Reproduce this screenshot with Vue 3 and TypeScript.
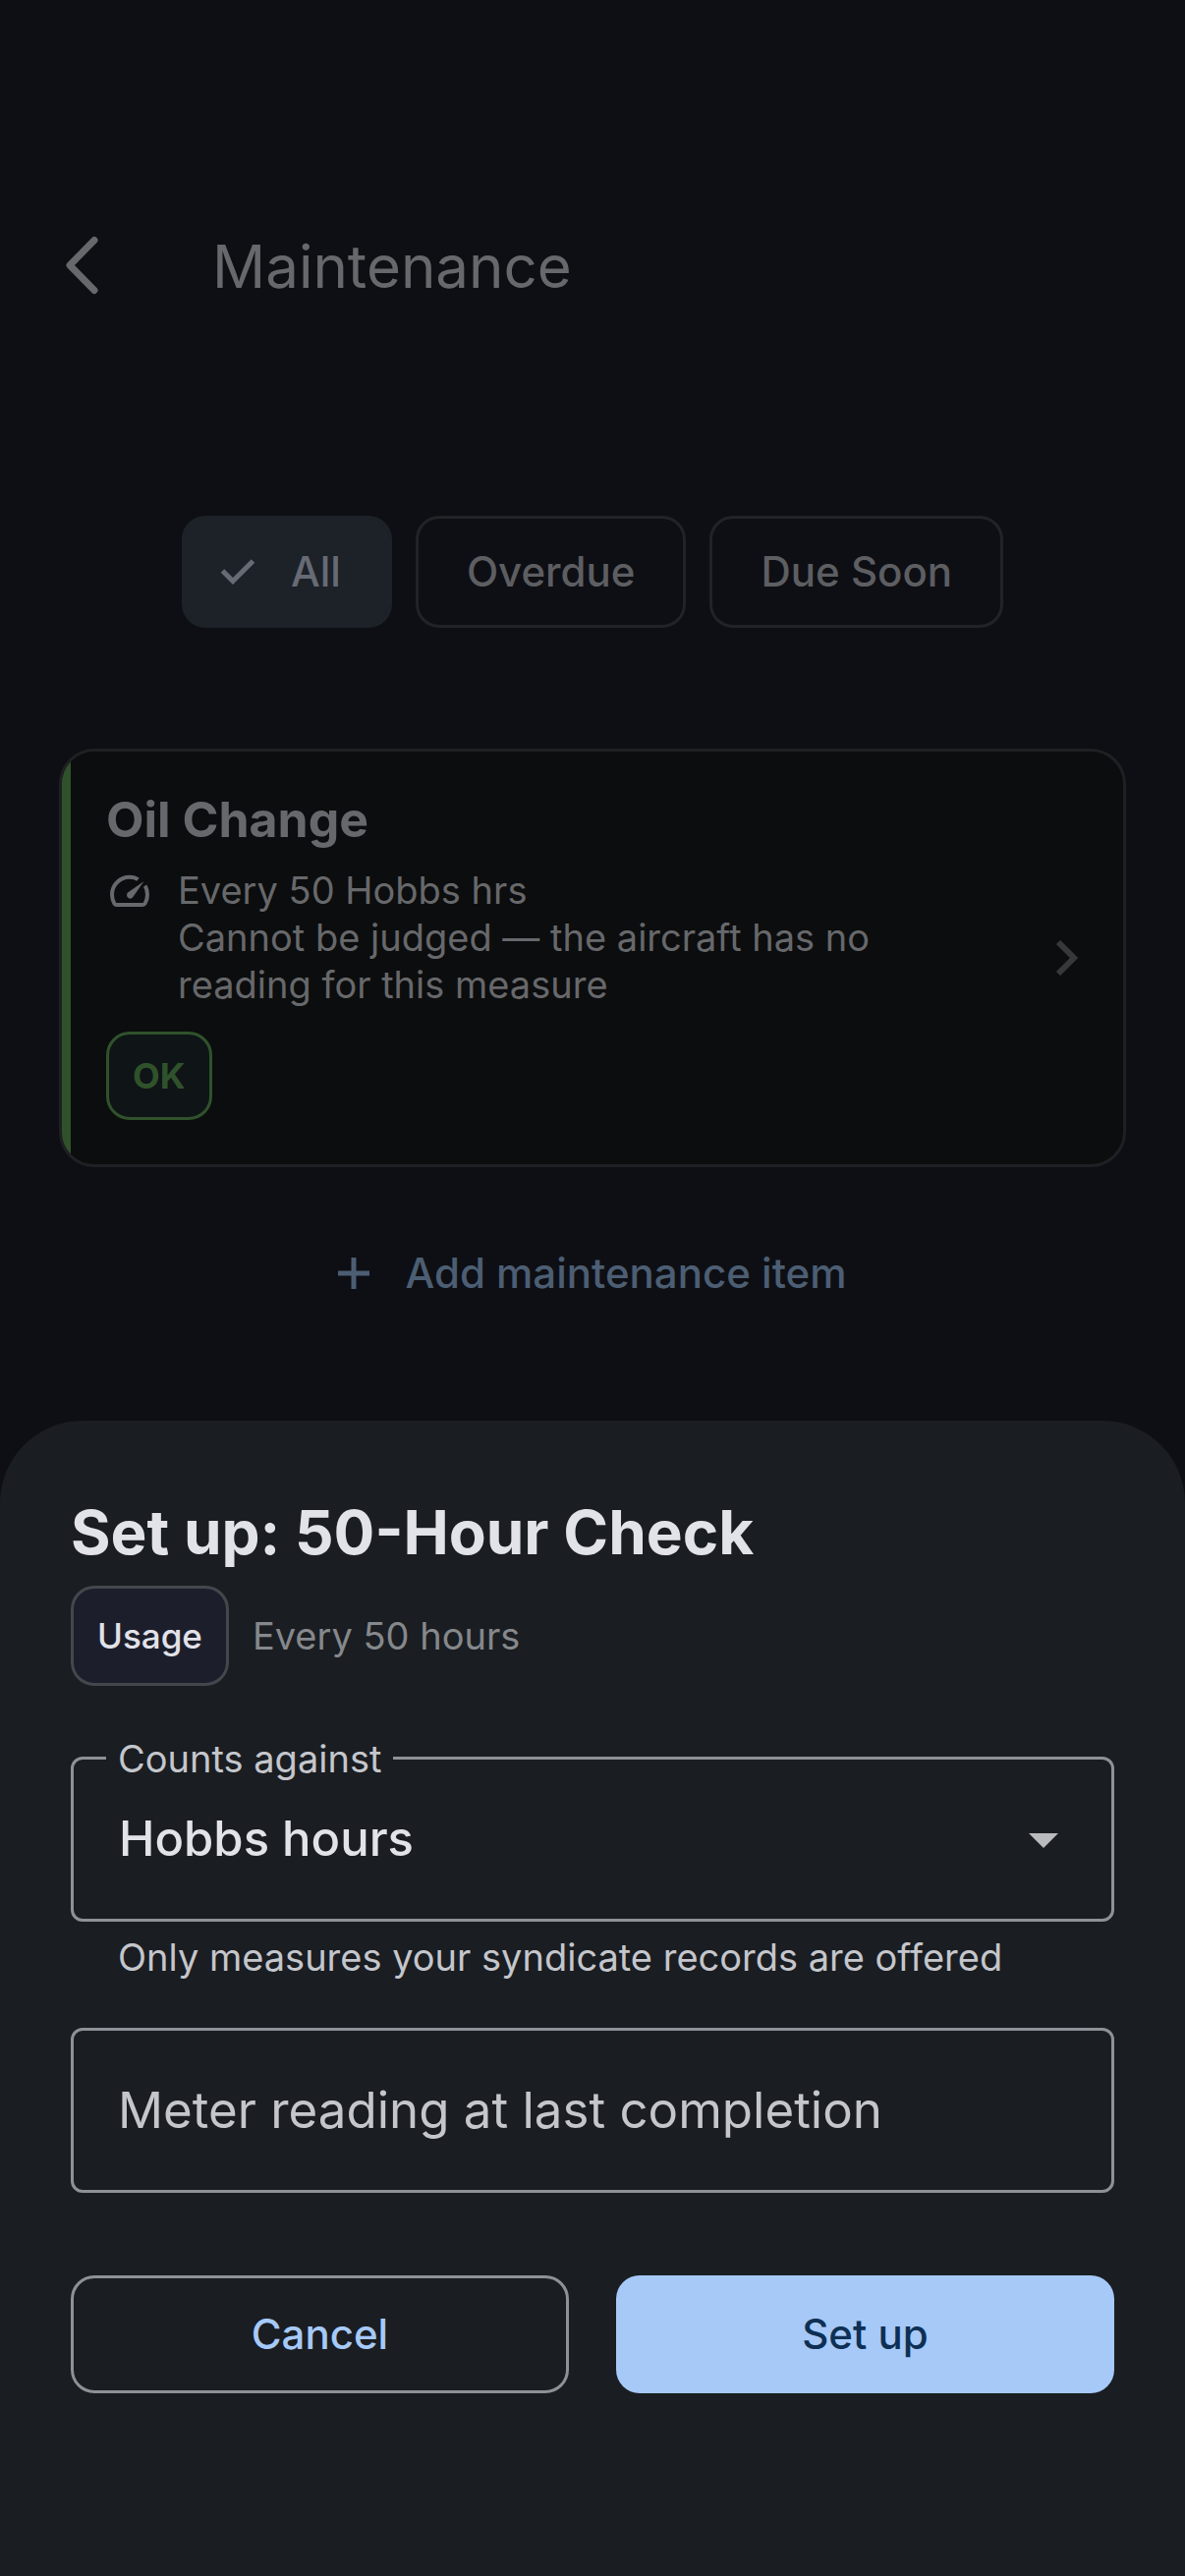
<script setup lang="ts">
import { ref } from 'vue'

type Filter = 'All' | 'Overdue' | 'Due Soon'

const filters: Filter[] = ['All', 'Overdue', 'Due Soon']
const activeFilter = ref<Filter>('All')
const measure = ref('Hobbs hours')
const reading = ref('')
</script>

<template>
  <div class="page">
    <header class="top-bar">
      <button class="back" type="button" aria-label="Back">
        <svg width="36" height="60" viewBox="0 0 36 60" fill="none" stroke="currentColor" stroke-width="7" stroke-linecap="round" stroke-linejoin="round">
          <path d="M31 4.500 6 30l25 25.500" />
        </svg>
      </button>
      <h1>Maintenance</h1>
    </header>

    <main class="content">
      <div class="filters" role="group" aria-label="Filter">
        <button
          v-for="filter in filters"
          :key="filter"
          type="button"
          class="chip"
          :class="{ selected: filter === activeFilter }"
          :aria-pressed="filter === activeFilter"
          @click="activeFilter = filter"
        >
          <svg v-if="filter === activeFilter" width="36" height="26" viewBox="0 0 36 26" fill="none" stroke="currentColor" stroke-width="5">
            <path d="M2.500 12 13 22.500 33.500 2" />
          </svg>
          {{ filter }}
        </button>
      </div>

      <article class="card">
        <div class="card-body">
          <h2>Oil Change</h2>
          <div class="schedule">
            <svg class="gauge" width="42" height="34" viewBox="0 0 42 34" fill="none" stroke="currentColor" stroke-width="4">
              <path d="M29.500 5.200C26.700 3.100 24.500 2.700 21 2.700 10.500 2.700 3 11 3 20.500c0 3.900.9 6.800 2.500 9.300.5.800 1.200 1.200 2.200 1.200h26.600c1 0 1.700-.4 2.200-1.200 1.600-2.500 2.500-5.400 2.500-9.300 0-3.500-.8-6.200-2.300-9" />
              <path d="M35.500 7 24.200 23.300c-3 3.600-8.300-.6-5.200-4.700z" fill="currentColor" stroke="none" />
            </svg>
            <p>Every 50 Hobbs hrs<br />Cannot be judged — the aircraft has no reading for this measure</p>
          </div>
          <span class="status">OK</span>
        </div>
        <svg class="chevron" width="24" height="36" viewBox="0 0 24 36" fill="none" stroke="currentColor" stroke-width="6">
          <path d="M3 2 19 18 3 34" />
        </svg>
      </article>

      <button class="add" type="button">
        <svg width="32" height="32" viewBox="0 0 32 32" fill="none" stroke="currentColor" stroke-width="5">
          <path d="M16 0v32M0 16h32" />
        </svg>
        Add maintenance item
      </button>
    </main>

    <section class="sheet" role="dialog" aria-labelledby="sheet-title">
      <h2 id="sheet-title">Set up: 50-Hour Check</h2>
      <div class="kind">
        <span class="tag">Usage</span>
        <span class="interval">Every 50 hours</span>
      </div>

      <form @submit.prevent>
        <div class="field">
          <label class="notch" for="measure">Counts against</label>
          <select id="measure" v-model="measure" aria-describedby="measure-help">
            <option>Hobbs hours</option>
          </select>
          <svg class="arrow" width="30" height="15" viewBox="0 0 30 15" fill="currentColor">
            <path d="M0 0h30L15 15z" />
          </svg>
        </div>
        <p id="measure-help" class="help">Only measures your syndicate records are offered</p>

        <div class="field">
          <input id="reading" v-model="reading" type="text" inputmode="decimal" />
          <label :class="reading ? 'notch' : 'resting'" for="reading">Meter reading at last completion</label>
        </div>

        <div class="actions">
          <button class="cancel" type="button">Cancel</button>
          <button class="submit" type="submit">Set up</button>
        </div>
      </form>
    </section>
  </div>
</template>

<style>
body {
  margin: 0;
  background: #0e0f14;
}
</style>

<style scoped>
.page,
.page * {
  box-sizing: border-box;
}

.page {
  display: flex;
  flex-direction: column;
  min-height: 100vh;
  background: #0e0f14;
  color: #67686b;
  font-family: Inter, "Liberation Sans", sans-serif;
  font-size: 38px;
  line-height: 48px;
}

h1,
h2,
p {
  margin: 0;
}

button {
  margin: 0;
  padding: 0;
  border: 0;
  background: none;
  color: inherit;
  font: inherit;
  font-size: 42px;
  font-weight: 500;
  cursor: pointer;
}

svg {
  display: block;
  flex: none;
}

.top-bar {
  display: flex;
  align-items: center;
  gap: 115px;
  height: 168px;
  margin-top: 186px;
  padding: 0 65px;
}

h1 {
  padding-top: 2px;
  font-size: 60px;
  font-weight: 400;
  line-height: 84px;
}

.content {
  display: flex;
  flex-direction: column;
  padding: 171px 60px 0;
}

.filters {
  display: flex;
  justify-content: center;
  gap: 24px;
}

.chip {
  display: flex;
  align-items: center;
  gap: 36px;
  height: 114px;
  padding: 0 49px;
  border: 3px solid #222327;
  border-radius: 24px;
  color: #5d5e62;
}

.chip.selected {
  padding-left: 36px;
  border-color: #1d2128;
  background: #1d2128;
  color: #666b74;
}

.card {
  display: flex;
  align-items: center;
  justify-content: space-between;
  margin-top: 123px;
  padding: 0 45px 0 36px;
  overflow: hidden;
  border: 3px solid #1f2023;
  border-radius: 36px;
  background: linear-gradient(to right, #30522b 9px, #0c0d0e 9px);
}

.card-body {
  flex: 1;
  padding: 33px 0 45px 9px;
}

.card h2 {
  font-size: 50px;
  font-weight: 700;
  line-height: 72px;
}

.schedule {
  display: flex;
  gap: 28px;
  max-width: 820px;
  margin-top: 12px;
}

.gauge {
  margin: 8px 0 0 3px;
}

.status {
  display: inline-block;
  margin-top: 24px;
  padding: 18px 24px;
  border: 3px solid #30522b;
  border-radius: 24px;
  background: #0f1417;
  color: #30522b;
  font-size: 36px;
  font-weight: 700;
}

.chevron {
  color: #37383a;
}

.add {
  display: flex;
  align-items: center;
  align-self: center;
  gap: 36px;
  height: 120px;
  margin-top: 48px;
  color: #4c5e73;
}

.sheet {
  margin-top: auto;
  padding: 72px 72px 186px;
  border-radius: 84px 84px 0 0;
  background: #1a1d21;
  color: #e2e2e9;
}

.sheet h2 {
  font-size: 62px;
  font-weight: 700;
  line-height: 84px;
}

.kind {
  display: flex;
  align-items: center;
  gap: 24px;
  margin-top: 12px;
}

.tag {
  padding: 24px;
  border: 3px solid #44474c;
  border-radius: 24px;
  background: #1c1f2b;
  font-size: 35px;
  font-weight: 500;
}

.interval {
  color: #85888c;
}

form {
  margin-top: 72px;
}

.field {
  position: relative;
}

.field select,
.field input {
  display: block;
  width: 100%;
  height: 168px;
  margin: 0;
  padding: 0 46px;
  border: 3px solid #8e9197;
  border-radius: 12px;
  outline: 0;
  appearance: none;
  background: transparent;
  color: #e2e2e9;
  font: inherit;
  font-size: 49px;
  font-weight: 500;
}

.notch {
  position: absolute;
  top: -22px;
  left: 36px;
  padding: 0 12px;
  background: #1a1d21;
  color: #c4c6cc;
}

.resting {
  position: absolute;
  inset: 0 48px;
  display: flex;
  align-items: center;
  color: #c4c6cc;
  font-size: 51px;
  pointer-events: none;
}

.arrow {
  position: absolute;
  top: 78px;
  right: 57px;
  color: #b9bbbd;
  pointer-events: none;
}

.help {
  margin: 12px 0 48px;
  padding: 0 48px;
  color: #c4c6cc;
}

.actions {
  display: grid;
  grid-template-columns: 1fr 1fr;
  gap: 48px;
  margin-top: 84px;
}

.actions button {
  height: 120px;
  border-radius: 24px;
}

.cancel {
  border: 3px solid #8e9197;
  color: #a6c9f8;
}

.submit {
  background: #a6c9f8;
  color: #0e3054;
}
</style>
